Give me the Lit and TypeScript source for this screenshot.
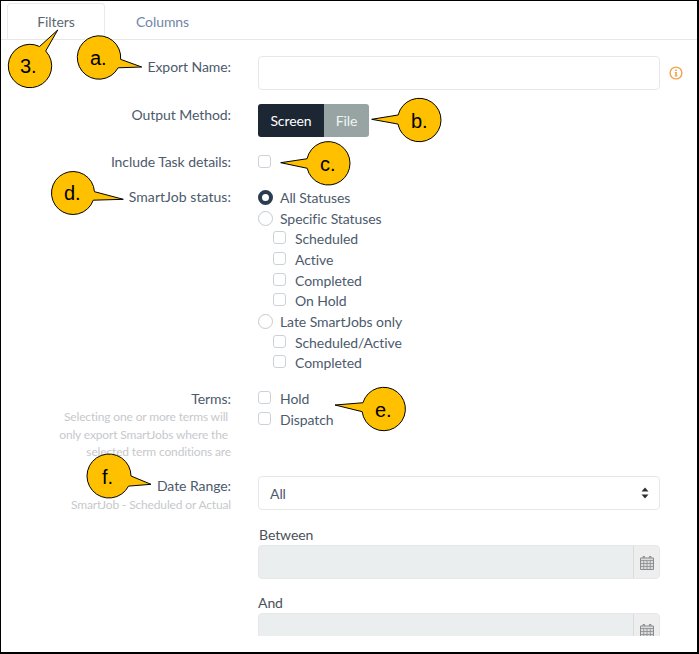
import { LitElement, html, css, svg } from "lit";
import { customElement } from "lit/decorators.js";

type Callout = { t: string; c: [number, number]; r: number; tip: [number, number]; b1: [number, number]; b2: [number, number]; x: number; y: number };

const CALLOUTS: Callout[] = [
  { t: "3.", c: [30, 66], r: 21.7, tip: [57.7, 30], b1: [39, 47.7], b2: [45.7, 51], x: 20, y: 73 },
  { t: "a.", c: [99, 57.5], r: 21.7, tip: [141.7, 67], b1: [120, 59.3], b2: [118.5, 68], x: 90, y: 65 },
  { t: "d.", c: [73, 193], r: 21.5, tip: [123.3, 199.3], b1: [94.3, 191.7], b2: [92.7, 200], x: 64, y: 200 },
  { t: "c.", c: [328.3, 163.3], r: 21.7, tip: [280.7, 162.7], b1: [308.3, 159], b2: [308.3, 168], x: 320, y: 171 },
  { t: "b.", c: [419.3, 120], r: 21.7, tip: [371.7, 119.3], b1: [398.3, 115], b2: [398.3, 124], x: 411, y: 128 },
  { t: "e.", c: [383.7, 409], r: 21.7, tip: [335, 405], b1: [362.7, 402.7], b2: [361.7, 411.7], x: 375, y: 417 },
  { t: "f.", c: [109, 476], r: 22, tip: [151, 484.3], b1: [131, 476], b2: [128.3, 486], x: 102, y: 484 },
];

function calloutPath(k: Callout): string {
  const [cx, cy] = k.c;
  const a1 = Math.atan2(k.b1[1] - cy, k.b1[0] - cx);
  const a2 = Math.atan2(k.b2[1] - cy, k.b2[0] - cx);
  const p1 = [cx + k.r * Math.cos(a1), cy + k.r * Math.sin(a1)];
  const p2 = [cx + k.r * Math.cos(a2), cy + k.r * Math.sin(a2)];
  const diff = (((a2 - a1) % (2 * Math.PI)) + 2 * Math.PI) % (2 * Math.PI);
  const sweep = diff > Math.PI ? 1 : 0;
  return `M${p1[0]} ${p1[1]} A${k.r} ${k.r} 0 1 ${sweep} ${p2[0]} ${p2[1]} L${k.tip[0]} ${k.tip[1]} Z`;
}

const calendar = html`<svg class="cal" viewBox="0 0 14 15" width="14" height="15">
  <path d="M3 1.5h1.6v2H3zM9.4 1.5H11v2H9.4z" fill="none" stroke="#8a8c8e" stroke-width="1"/>
  <path d="M.5 3h13v11.5H.5z" fill="#dcdcdc" stroke="#8a8c8e" stroke-width="1"/>
  <path d="M.5 5.5h13M.5 8.5h13M.5 11.5h13M3.7 5.5v9M7 5.5v9M10.3 5.5v9" fill="none" stroke="#8a8c8e" stroke-width=".8"/>
</svg>`;

@customElement("app-root")
export class AppRoot extends LitElement {
  static styles = css`
    :host {
      display: block;
      width: 699px;
      height: 654px;
      position: relative;
      box-sizing: border-box;
      border: 1px solid #000;
      border-right-width: 2px;
      border-bottom-width: 2px;
      background: #fff;
      font-family: Lato, "Open Sans", sans-serif;
      font-size: 14px;
      letter-spacing: -0.07px;
      color: #4c5a6c;
      overflow: hidden;
    }
    .clip { height: 635px; overflow: hidden; }
    .tabs {
      display: flex;
      height: 38px;
      padding-left: 6px;
      border-bottom: 1px solid #e5e8e8;
    }
    .tab {
      width: 98px;
      height: 36px;
      margin-top: 2px;
      display: flex;
      align-items: center;
      justify-content: center;
      color: #5c6873;
      background: #fff;
      border: 1px solid #e9ebeb;
      border-bottom: 1px solid #fff;
      border-radius: 4px 4px 0 0;
      margin-bottom: -1px;
      box-sizing: border-box;
    }
    .tab.plain { border-color: transparent; background: none; width: 115px; color: #6f86a8; }
    .form { display: flex; flex-direction: column; padding-top: 16px; }
    .row { display: grid; grid-template-columns: 230px 402px; column-gap: 27px; }
    .row.export { height: 48px; }
    .row.output { height: 48px; }
    .row.task { height: 35px; }
    .row.status { height: 202px; }
    .row.terms { height: 87px; }
    .row.date { height: 49px; }
    .lab { text-align: right; line-height: 20px; }
    .lab.low { padding-top: 1px; }
    .lab.wide { letter-spacing: 0.05px; }
    .help {
      text-align: right;
      color: #c6c9cc;
      font-size: 12px;
      letter-spacing: -0.15px;
      line-height: 17.5px;
    }
    .help.tight { margin-top: -1px; }
    .help .inset { padding-right: 3px; }
    .text-input {
      height: 34px;
      box-sizing: border-box;
      border: 1px solid #e6e8e8;
      border-radius: 4px;
      background: #fff;
    }
    .info { position: absolute; left: 668px; top: 65px; }
    .seg { display: inline-flex; height: 33px; border-radius: 3px; overflow: hidden; color: #fff; }
    .seg span { display: flex; align-items: center; justify-content: center; }
    .seg .on { width: 66px; background: #1c2733; }
    .seg .off { width: 45px; background: #98a4a3; color: #f1f4f4; }
    .opt { display: flex; align-items: center; height: 20.7px; }
    .opt.sub { padding-left: 15px; }
    .opts-up { margin-top: -1px; }
    .box {
      width: 13px;
      height: 13px;
      box-sizing: border-box;
      border: 1px solid #cdd2d7;
      border-radius: 3px;
      background: #fff;
      margin-right: 9px;
      flex: none;
      position: relative;
      top: -1px;
    }
    .radio {
      width: 15px;
      height: 15px;
      box-sizing: border-box;
      border: 1px solid #c4cad0;
      border-radius: 50%;
      margin-right: 7px;
      flex: none;
      background: #fff;
    }
    .radio.on { border: 4.5px solid #2a3c50; }
    .select {
      height: 34px;
      box-sizing: border-box;
      border: 1px solid #e6e8e8;
      border-radius: 4px;
      display: flex;
      align-items: center;
      justify-content: space-between;
      padding: 0 10px 0 11px;
    }
    .cap { line-height: 20px; color: #4a5158; }
    .cap.first { padding-left: 1px; }
    .cap.next { margin-top: 14px; }
    .dis {
      height: 34px;
      box-sizing: border-box;
      display: flex;
      border: 1px solid #e6e8e8;
      border-radius: 4px;
      background: #ebeeef;
      overflow: hidden;
    }
    .dis .fill { flex: 1; }
    .dis .addon {
      width: 25px;
      border-left: 1px solid #d9dbdb;
      background: #eeeeee;
      display: flex;
      align-items: center;
      justify-content: center;
    }
    .cal { display: block; }
    .overlay { position: absolute; left: -1px; top: -1px; pointer-events: none; }
    .overlay text { font-family: "Liberation Sans", Arial, sans-serif; font-size: 20px; letter-spacing: 0; fill: #000; }
  `;

  private opt(label: string, kind: "box" | "radio" | "on", sub = false) {
    const cls = kind === "box" ? "box" : kind === "on" ? "radio on" : "radio";
    return html`<div class="opt ${sub ? "sub" : ""}"><span class=${cls}></span>${label}</div>`;
  }

  render() {
    return html`
      <div class="clip">
        <div class="tabs">
          <div class="tab">Filters</div>
          <div class="tab plain">Columns</div>
        </div>
        <div class="form">
          <div class="row export">
            <div class="lab low">Export Name:</div>
            <div class="text-input"></div>
          </div>
          <div class="row output">
            <div class="lab low">Output Method:</div>
            <div><div class="seg"><span class="on">Screen</span><span class="off">File</span></div></div>
          </div>
          <div class="row task">
            <div class="lab">Include Task details:</div>
            <div class="opt"><span class="box"></span></div>
          </div>
          <div class="row status">
            <div class="lab wide">SmartJob status:</div>
            <div>
              ${this.opt("All Statuses", "on")}
              ${this.opt("Specific Statuses", "radio")}
              ${this.opt("Scheduled", "box", true)}
              ${this.opt("Active", "box", true)}
              ${this.opt("Completed", "box", true)}
              ${this.opt("On Hold", "box", true)}
              ${this.opt("Late SmartJobs only", "radio")}
              ${this.opt("Scheduled/Active", "box", true)}
              ${this.opt("Completed", "box", true)}
            </div>
          </div>
          <div class="row terms">
            <div>
              <div class="lab">Terms:</div>
              <div class="help tight"><span class="inset">Selecting one or more terms will</span><br /><span class="inset">only export SmartJobs where the</span><br />selected term conditions are</div>
            </div>
            <div class="opts-up">
              ${this.opt("Hold", "box")}
              ${this.opt("Dispatch", "box")}
            </div>
          </div>
          <div class="row date">
            <div>
              <div class="lab">Date Range:</div>
              <div class="help">SmartJob - Scheduled or Actual</div>
            </div>
            <div class="select">
              <span>All</span>
              <svg width="8" height="12" viewBox="0 0 8 12"><path d="M4 0.5 7.5 4.5H.5zM4 11.5 .5 7.5h7z" fill="#2b2f33"/></svg>
            </div>
          </div>
          <div class="row">
            <div></div>
            <div>
              <div class="cap first">Between</div>
              <div class="dis"><div class="fill"></div><div class="addon">${calendar}</div></div>
              <div class="cap next">And</div>
              <div class="dis"><div class="fill"></div><div class="addon">${calendar}</div></div>
            </div>
          </div>
        </div>
      </div>
      <svg class="info" width="14" height="14" viewBox="0 0 14 14">
        <circle cx="7" cy="7" r="5.9" fill="none" stroke="#f0a54a" stroke-width="1.4"/>
        <path d="M6.2 3.4h1.6v1.5H6.2zM5.8 6h2v3.6h.7v1H5.6v-1h.7V7h-.5z" fill="#ef9f3f"/>
      </svg>
      <svg class="overlay" width="699" height="654" viewBox="0 0 699 654">
        ${CALLOUTS.map(
          (k) => svg`<path d=${calloutPath(k)} fill="#ffc000" stroke="#000" stroke-width="1"/>
            <text x=${k.x} y=${k.y}>${k.t}</text>`
        )}
      </svg>
    `;
  }
}
